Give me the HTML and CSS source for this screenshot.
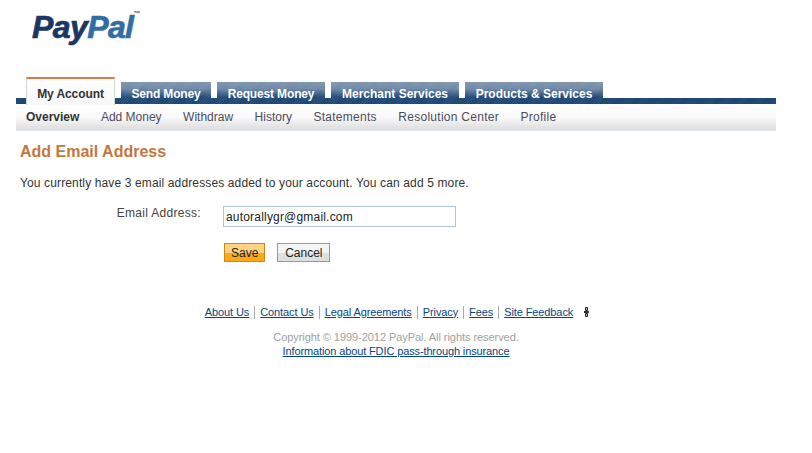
FILE: index.html
```html
<!DOCTYPE html>
<html lang="en">
<head>
<meta charset="utf-8">
<title>Add Email Address - PayPal</title>
<link rel="stylesheet" href="styles.css">
</head>
<body>
<div class="page">
  <header class="logo-row">
    <div class="logo"><span class="pay">Pay</span><span class="pal">Pal</span><sup class="tm">™</sup></div>
  </header>
  <nav class="tabs">
    <a class="tab active">My Account</a>
    <a class="tab tab-send">Send Money</a>
    <a class="tab tab-request">Request Money</a>
    <a class="tab tab-merchant">Merchant Services</a>
    <a class="tab tab-products">Products &amp; Services</a>
  </nav>
  <nav class="subnav">
    <a class="current">Overview</a>
    <a>Add Money</a>
    <a>Withdraw</a>
    <a>History</a>
    <a class="wide">Statements</a>
    <a class="wide">Resolution Center</a>
    <a class="wide">Profile</a>
  </nav>
  <main class="content">
    <h1>Add Email Address</h1>
    <p class="intro">You currently have 3 email addresses added to your account. You can add 5 more.</p>
    <div class="field">
      <label class="field-label" for="email">Email Address:</label>
      <input class="field-input" id="email" type="text" value="autorallygr@gmail.com">
    </div>
    <div class="actions">
      <button class="btn primary" type="button">Save</button>
      <button class="btn" type="button">Cancel</button>
    </div>
  </main>
  <footer class="footer">
    <div class="foot-links">
      <a>About Us</a><a>Contact Us</a><a>Legal Agreements</a><a>Privacy</a><a>Fees</a><a>Site Feedback</a>
      <svg class="feedback-icon" width="5" height="10" viewBox="0 0 5 10" aria-hidden="true"><path d="M1.5.5h2v3h-2zM1.5 6.500h2v3h-2z" fill="#bbb" stroke="#222" stroke-width="1"/><path d="M0 5h5" stroke="#333" stroke-width="2"/></svg>
    </div>
    <p class="copyright">Copyright © 1999-2012 PayPal. All rights reserved.</p>
    <a class="fdic">Information about FDIC pass-through insurance</a>
  </footer>
</div>
</body>
</html>
```

FILE: styles.css
```css
html, body {
  margin: 0;
  padding: 0;
  background: #fff;
}
body {
  font-family: "Liberation Sans", Arial, sans-serif;
  font-size: 12px;
  color: #333;
}
.page {
  width: 760px;
  margin-left: 16px;
}
.logo-row {
  height: 77px;
  padding-left: 16px;
  box-sizing: border-box;
}
.logo {
  padding-top: 9px;
  font-size: 32px;
  line-height: 36px;
  font-weight: bold;
  font-style: italic;
  letter-spacing: -0.6px;
  -webkit-text-stroke: 0.7px currentColor;
  display: flex;
  align-items: flex-start;
}
.pay { color: #1a3665; }
.pal { color: #2f6ea5; }
.tm {
  font-size: 7px;
  line-height: 10px;
  margin-top: 0;
  font-style: normal;
  color: #555;
  letter-spacing: 0;
  -webkit-text-stroke: 0;
}
.tabs {
  display: flex;
  align-items: flex-end;
  gap: 6px;
  height: 27px;
  padding-left: 10px;
  background:
    repeating-linear-gradient(135deg, rgba(255,255,255,.05) 0 1px, transparent 1px 2px) 0 21px / 100% 6px no-repeat,
    linear-gradient(to bottom, transparent 21px, #1a4471 21px);
}
.tab {
  box-sizing: border-box;
  height: 22px;
  padding-top: 5px;
  font-size: 12px;
  line-height: 14px;
  font-weight: bold;
  color: #fff;
  text-align: center;
  background:
    repeating-linear-gradient(135deg, rgba(255,255,255,.07) 0 1px, transparent 1px 2px),
    linear-gradient(to bottom, #7d93ae 0, #6d87a5 7px, #1d4776 15px, #1a4471 100%);
}
.tab-send { width: 90px; letter-spacing: -0.15px; }
.tab-request { width: 108px; letter-spacing: -0.15px; }
.tab-merchant { width: 128px; }
.tab-products { width: 138px; }
.tab.active {
  width: 89px;
  height: 28px;
  margin-bottom: -1px;
  padding-top: 8px;
  letter-spacing: -0.1px;
  color: #333;
  background: linear-gradient(to bottom, #fff, #f7f7f7);
  border: 1px solid #d5d5d5;
  border-bottom: 0;
  border-top: 2px solid #dd7748;
}
.subnav {
  display: flex;
  gap: 21.5px;
  height: 27px;
  padding-left: 10px;
  align-items: center;
  box-sizing: border-box;
  background: linear-gradient(to bottom, #fff 0, #fafafa 50%, #dcdcdc 100%);
  border-bottom: 1px solid #dfe7f2;
}
.subnav a {
  color: #4c4c5c;
}
.subnav a.wide {
  letter-spacing: 0.27px;
}
.subnav a.current {
  color: #333;
  font-weight: bold;
}
.content {
  padding-left: 4px;
}
h1 {
  margin: 11px 0 0;
  font-size: 16px;
  line-height: 19px;
  font-weight: bold;
  color: #c4773b;
}
.intro {
  margin: 15px 0 0;
  line-height: 14px;
  letter-spacing: 0.13px;
}
.field {
  display: flex;
  margin-top: 16px;
}
.field-label {
  width: 181px;
  text-align: right;
  line-height: 14px;
  color: #444;
  letter-spacing: 0.3px;
}
.field-input {
  box-sizing: border-box;
  width: 233px;
  height: 21px;
  margin: 0 0 0 22px;
  padding: 0 2px;
  font: 12px "Liberation Sans", Arial, sans-serif;
  letter-spacing: 0.19px;
  color: #222;
  border: 1px solid #b0c2d6;
  outline: 0;
}
.actions {
  display: flex;
  gap: 12px;
  margin: 16px 0 0 204px;
}
.btn {
  box-sizing: border-box;
  height: 19px;
  padding: 0 6px;
  font: 12px "Liberation Sans", Arial, sans-serif;
  color: #222;
  border: 1px solid #999;
  background: linear-gradient(to bottom, #f4f4f4 0, #f4f4f4 50%, #dfdfdf 50%, #dfdfdf 100%);
}
.btn:not(.primary) {
  width: 53px;
}
.btn.primary {
  border-color: #c98a1c;
  background: linear-gradient(to bottom, #ffd27f 0, #ffd27f 50%, #fba919 50%, #fba919 100%);
}
.footer {
  margin-top: 43px;
  text-align: center;
  font-size: 11px;
  line-height: 13px;
}
.foot-links {
  display: flex;
  justify-content: center;
  align-items: center;
  height: 14px;
  padding-right: 3px;
}
.foot-links a {
  color: #084482;
  text-decoration: underline;
  letter-spacing: -0.1px;
  padding: 0 5px;
  border-left: 1px solid #aaa;
}
.foot-links a:first-child {
  border-left: 0;
}
.feedback-icon {
  margin-left: 6px;
}
.copyright {
  margin: 12px 0 0;
  color: #a0a0a0;
  letter-spacing: -0.06px;
}
.fdic {
  display: block;
  margin-top: 1px;
  color: #084482;
  text-decoration: underline;
  font-size: 11px;
  letter-spacing: -0.12px;
}
```
